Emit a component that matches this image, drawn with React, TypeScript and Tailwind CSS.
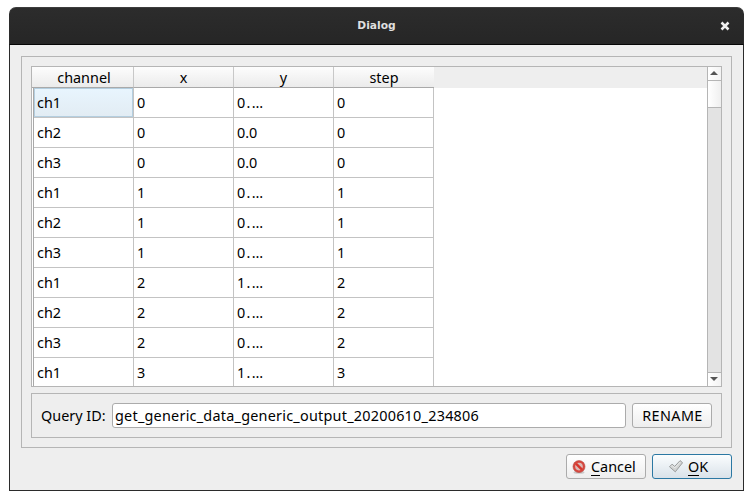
import React from "react";

const columns = ["channel", "x", "y", "step"];

const rows = [
  ["ch1", "0", "0.…", "0"],
  ["ch2", "0", "0.0", "0"],
  ["ch3", "0", "0.0", "0"],
  ["ch1", "1", "0.…", "1"],
  ["ch2", "1", "0.…", "1"],
  ["ch3", "1", "0.…", "1"],
  ["ch1", "2", "1.…", "2"],
  ["ch2", "2", "0.…", "2"],
  ["ch3", "2", "0.…", "2"],
  ["ch1", "3", "1.…", "3"],
];

function TitleBar() {
  return (
    <header className="grid h-[38px] shrink-0 grid-cols-[1fr_auto_1fr] items-center rounded-t-[7px] border-x border-t border-b border-x-[#2b2b2b] border-t-[#3d3d3d] border-b-[#060606] bg-linear-to-b from-[#2c2c2c] to-[#262626]">
      <span />
      <h1 className="font-['DejaVu_Sans',sans-serif] text-[10.7px] leading-4 font-bold text-[#dfdfdf]">Dialog</h1>
      <button aria-label="Close" className="mr-[13px] justify-self-end">
        <svg width="10" height="10" viewBox="0 0 10 10" className="block">
          <path d="M1.5 1.5 8.5 8.5M8.5 1.5 1.5 8.5" stroke="#f0f0f0" strokeWidth="2.5" />
        </svg>
      </button>
    </header>
  );
}

function ScrollBar() {
  return (
    <div className="flex w-[14px] shrink-0 flex-col border-l border-[#b5b5b5] bg-[#e3e3e3]">
      <div className="flex h-[14px] items-center justify-center border-b border-[#b5b5b5] bg-linear-to-r from-white to-[#f3f3f3] pr-px pb-px">
        <svg width="8" height="4" viewBox="0 0 8 4"><path d="M0 4 4 0 8 4Z" fill="#555" /></svg>
      </div>
      <div className="h-[27px] border-b border-[#b5b5b5] bg-linear-to-r from-white to-[#efefef]" />
      <div className="flex-1" />
      <div className="flex h-[14px] items-center justify-center border-t border-[#b5b5b5] bg-linear-to-r from-white to-[#f3f3f3] pr-px pb-px">
        <svg width="8" height="4" viewBox="0 0 8 4"><path d="M0 0 4 4 8 0Z" fill="#555" /></svg>
      </div>
    </div>
  );
}

function DataTable() {
  return (
    <section className="flex h-[321px] border border-[#b5b5b5] bg-white">
      <div className="flex min-w-0 flex-1 flex-col overflow-hidden">
        <div className="flex h-[21px] shrink-0 bg-[#eee]">
          {columns.map((name, i) => (
            <div
              key={name}
              className={`flex items-center justify-center border-b border-b-[#a9a9a9] bg-linear-to-b from-[#fdfdfd] via-[#f4f4f4] to-[#ebebeb] pt-px leading-5 ${
                i === 0 ? "w-[102px] border-r border-r-[#c8c8c8] pl-[3px]" : i === 3 ? "w-[100px]" : "w-[100px] border-r border-r-[#c8c8c8]"
              }`}
            >
              {name}
            </div>
          ))}
        </div>
        <div className="flex flex-1 overflow-hidden">
          <div className="w-0.5 shrink-0 border-r border-[#a9a9a9]" />
          <div className="flex flex-col">
            {rows.map((row, r) => (
              <div key={r} className="flex h-[30px] shrink-0">
                {row.map((cell, c) => (
                  <div
                    key={c}
                    className={`flex w-[100px] items-center border-r border-b border-[#c3c3c3] pl-[3px] ${
                      cell.endsWith("…") ? "tracking-[1.3px]" : ""
                    } ${
                      r === 0 && c === 0 ? "bg-linear-to-b from-[#e8f5fe] to-[#e2ecf3] shadow-[inset_0_0_0_1px_#b4cedf]" : ""
                    }`}
                  >
                    {cell}
                  </div>
                ))}
              </div>
            ))}
          </div>
        </div>
      </div>
      <ScrollBar />
    </section>
  );
}

function CancelIcon() {
  return (
    <svg width="14" height="14" viewBox="0 0 14 14" className="shrink-0">
      <ellipse cx="7" cy="12.4" rx="5.5" ry="1.3" fill="#c9c9c9" />
      <circle cx="7" cy="6.6" r="6" fill="#d8473e" stroke="#b4463f" strokeWidth=".6" />
      <circle cx="7" cy="6.6" r="3.8" fill="#dcbab7" />
      <path d="M4 3.7 10 9.6" stroke="#d7352b" strokeWidth="2.4" />
    </svg>
  );
}

function OkIcon() {
  return (
    <svg width="14" height="13" viewBox="0 0 14 13" className="shrink-0">
      <path d="M.5 6.8 3 4.2 5.7 6.4 11.1.6 13.6 2.7 6.3 11.8Z" fill="#d2d4d4" stroke="#929494" strokeWidth=".9" strokeLinejoin="round" />
      <path d="M2 6.6 3.1 5.5 5.9 7.8 11.2 2" fill="none" stroke="#eceeee" strokeWidth=".9" />
    </svg>
  );
}

function Mnemonic({ children }: { children: string }) {
  return <span className="inline-block h-[18px] border-b border-black leading-[18px]">{children}</span>;
}

export default function App() {
  return (
    <main className="h-[500px] w-[753px] bg-white pt-[7px] pl-[9px] font-['Noto_Sans',sans-serif] text-[14.4px] text-black">
      <div className="flex h-[484px] w-[735px] flex-col">
        <TitleBar />
        <div className="flex flex-1 flex-col border-x border-b border-[#2b2b2b] bg-[#eee] px-[11px] pt-[11px]">
          <div className="flex h-[392px] flex-col gap-1.5 border border-[#b5b5b5] p-[9px]">
            <DataTable />
            <section className="flex h-[45px] items-center border border-[#b5b5b5] px-[9px]">
              <label htmlFor="query-id" className="w-[71px] shrink-0 whitespace-nowrap">Query ID:</label>
              <input
                id="query-id"
                readOnly
                value="get_generic_data_generic_output_20200610_234806"
                className="h-[25px] w-[514px] rounded-[3px] border border-[#ababab] bg-white px-0.5 tracking-[0.24px] outline-none"
              />
              <button className="ml-1.5 h-[25px] w-[80px] rounded-[3px] border border-[#ababab] bg-linear-to-b from-white to-[#eee] pl-px tracking-[0.4px]">RENAME</button>
            </section>
          </div>
          <div className="mt-1.5 flex justify-end gap-1.5">
            <button className="flex h-[25px] w-[80px] items-center rounded-[3px] border border-[#ababab] bg-linear-to-b from-white to-[#eee] pl-[5px]">
              <CancelIcon />
              <span className="ml-[5px]"><Mnemonic>C</Mnemonic>ancel</span>
            </button>
            <button className="flex h-[25px] w-[80px] items-center rounded-[3px] border border-[#2b78a3] bg-linear-to-b from-[#fbfdfe] to-[#d9e2e9] pl-4">
              <OkIcon />
              <span className="ml-[5px]"><Mnemonic>O</Mnemonic>K</span>
            </button>
          </div>
        </div>
      </div>
    </main>
  );
}
